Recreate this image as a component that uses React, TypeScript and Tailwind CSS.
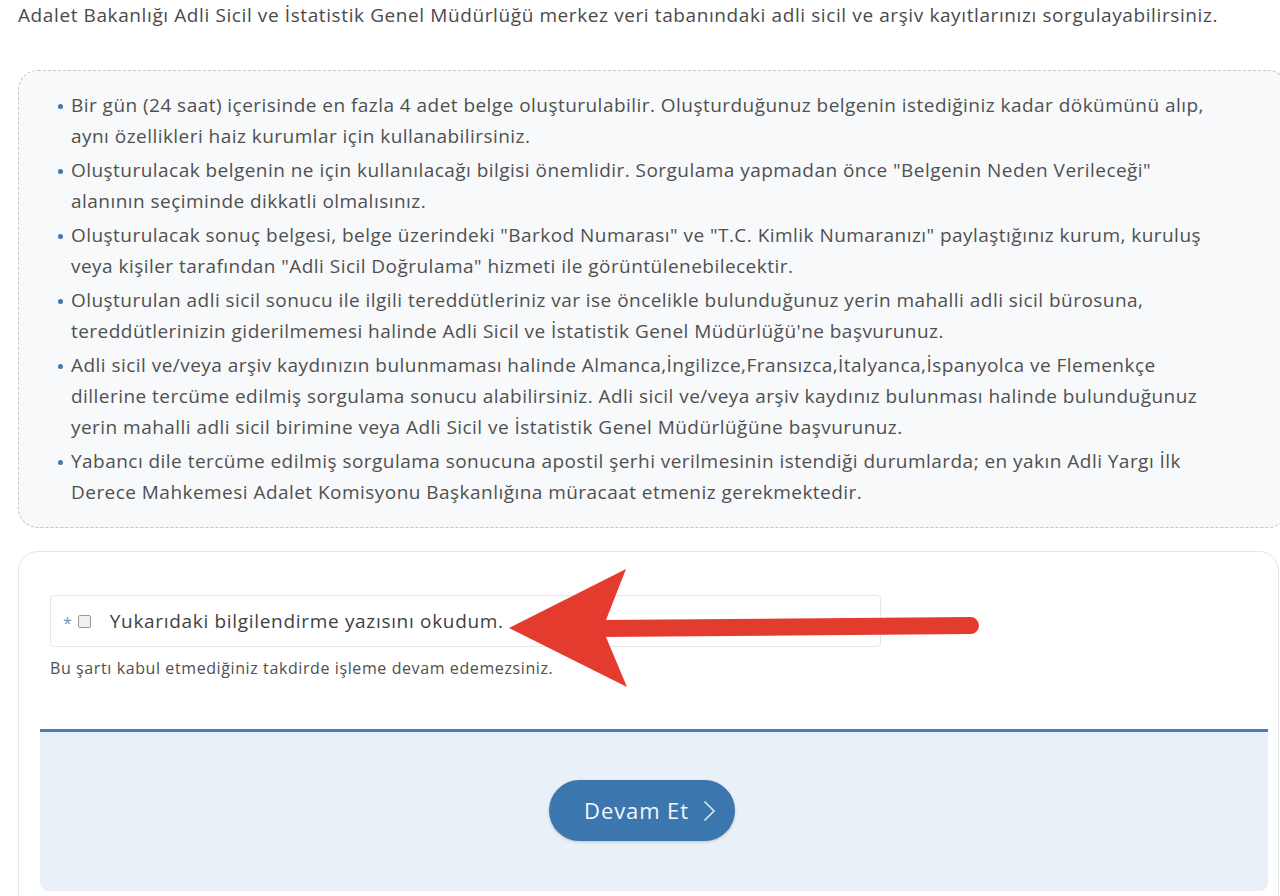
import React from "react";

const items: string[][] = [
  [
    "Bir gün (24 saat) içerisinde en fazla 4 adet belge oluşturulabilir. Oluşturduğunuz belgenin istediğiniz kadar dökümünü alıp,",
    "aynı özellikleri haiz kurumlar için kullanabilirsiniz.",
  ],
  [
    "Oluşturulacak belgenin ne için kullanılacağı bilgisi önemlidir. Sorgulama yapmadan önce \"Belgenin Neden Verileceği\"",
    "alanının seçiminde dikkatli olmalısınız.",
  ],
  [
    "Oluşturulacak sonuç belgesi, belge üzerindeki \"Barkod Numarası\" ve \"T.C. Kimlik Numaranızı\" paylaştığınız kurum, kuruluş",
    "veya kişiler tarafından \"Adli Sicil Doğrulama\" hizmeti ile görüntülenebilecektir.",
  ],
  [
    "Oluşturulan adli sicil sonucu ile ilgili tereddütleriniz var ise öncelikle bulunduğunuz yerin mahalli adli sicil bürosuna,",
    "tereddütlerinizin giderilmemesi halinde Adli Sicil ve İstatistik Genel Müdürlüğü'ne başvurunuz.",
  ],
  [
    "Adli sicil ve/veya arşiv kaydınızın bulunmaması halinde Almanca,İngilizce,Fransızca,İtalyanca,İspanyolca ve Flemenkçe",
    "dillerine tercüme edilmiş sorgulama sonucu alabilirsiniz. Adli sicil ve/veya arşiv kaydınız bulunması halinde bulunduğunuz",
    "yerin mahalli adli sicil birimine veya Adli Sicil ve İstatistik Genel Müdürlüğüne başvurunuz.",
  ],
  [
    "Yabancı dile tercüme edilmiş sorgulama sonucuna apostil şerhi verilmesinin istendiği durumlarda; en yakın Adli Yargı İlk",
    "Derece Mahkemesi Adalet Komisyonu Başkanlığına müracaat etmeniz gerekmektedir.",
  ],
];

export default function App() {
  return (
    <div
      className="relative w-[1280px] h-[896px] overflow-hidden bg-white text-[#505050]"
      style={{ fontFamily: '"Open Sans", "Noto Sans", sans-serif' }}
    >
      <div className="pl-[18px]">
        <p className="text-[19px] leading-[31px] tracking-[0.6px] whitespace-nowrap text-[#4a4a4a]">
          Adalet Bakanlığı Adli Sicil ve İstatistik Genel Müdürlüğü merkez veri tabanındaki adli sicil ve arşiv kayıtlarınızı sorgulayabilirsiniz.
        </p>

        <div className="mt-[39px] w-[1270px] rounded-[20px] border border-dashed border-[#c4c7cc] bg-[#f7f9fb] pt-[19px] pb-[19px] pl-[39px]">
          <ul className="flex flex-col gap-[3px]">
            {items.map((lines, i) => (
              <li key={i} className="flex items-start gap-[8px] text-[19px] leading-[31px] tracking-[0.46px]">
                <span className="mt-[14px] h-[5px] w-[5px] shrink-0 rounded-full bg-[#3d78ae]" />
                <span className="flex flex-col">
                  {lines.map((l, j) => (
                    <span key={j} className="whitespace-nowrap">
                      {l}
                    </span>
                  ))}
                </span>
              </li>
            ))}
          </ul>
        </div>

        <div className="mt-[23px] w-[1261px] h-[400px] rounded-[20px] border border-[#e4e6e9] bg-white pt-[43px]">
          <div className="ml-[31px]">
            <div className="flex h-[52px] w-[831px] items-center rounded-[4px] border border-[#e6e8eb] pl-[12px]">
              <span className="text-[16px] text-[#6f98bd] leading-none mt-[4px]">*</span>
              <span className="ml-[6px] h-[13px] w-[13px] rounded-[2px] border border-[#9a9a9a] bg-[#f1f1f1]" />
              <span className="ml-[19px] text-[19px] tracking-[0.68px] text-[#3f3f3f]">
                Yukarıdaki bilgilendirme yazısını okudum.
              </span>
            </div>
            <p className="mt-[11px] text-[16px] leading-[20px] tracking-[0.6px] text-[#4f4f4f]">
              Bu şartı kabul etmediğiniz takdirde işleme devam edemezsiniz.
            </p>
          </div>

          <div className="mt-[51px] ml-[21px] w-[1228px] h-[162px] rounded-b-[8px] border-t-[3px] border-[#4a7db3] bg-[#eaf0f8] flex justify-center pt-[48px]">
            <button className="mr-[24px] flex h-[61px] w-[186px] items-center justify-center gap-[14px] rounded-full bg-[#3b76ae] pl-[16px] text-[22px] tracking-[0.9px] text-[#f3f6fb] shadow-[0_1px_3px_rgba(0,0,0,0.2)]">
              <span>Devam Et</span>
              <svg width="13" height="22" viewBox="0 0 13 22" fill="none">
                <path d="M1.5 1.5 L11 11 L1.5 20.5" stroke="#dbe6f3" strokeWidth="1.6" />
              </svg>
            </button>
          </div>
        </div>
      </div>

      <svg
        className="pointer-events-none absolute left-0 top-0"
        width="1280"
        height="896"
        viewBox="0 0 1280 896"
      >
        <line x1="600" y1="628.5" x2="970.5" y2="625.5" stroke="#e43b2f" strokeWidth="17" strokeLinecap="round" />
        <polygon points="509,628 626,569 606,620 606,637 627,687" fill="#e43b2f" />
      </svg>
    </div>
  );
}
